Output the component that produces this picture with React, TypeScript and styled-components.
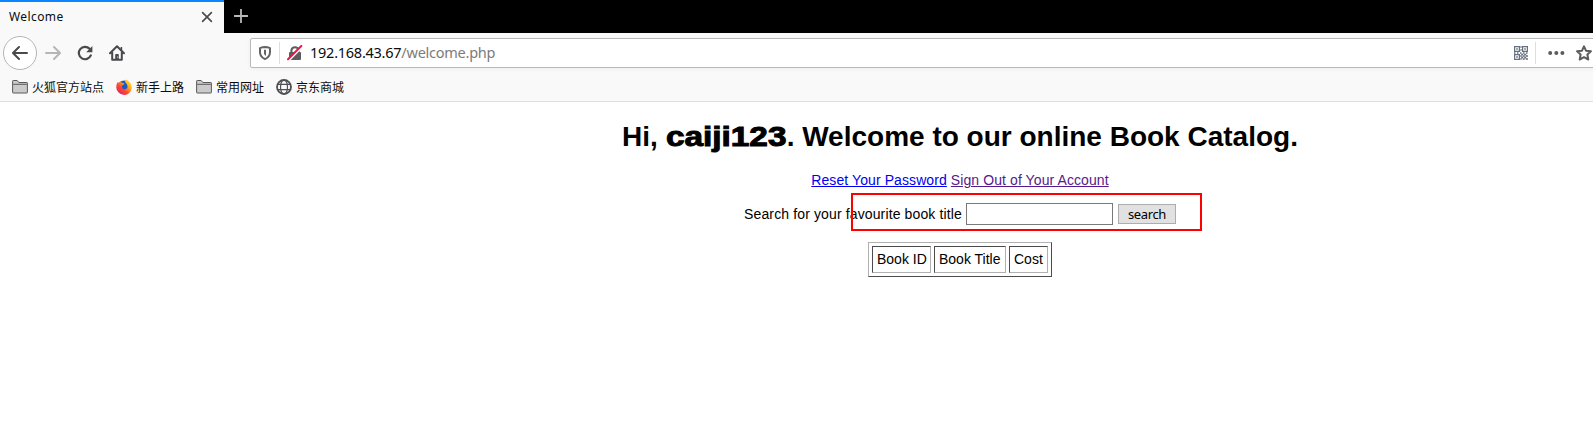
import React from "react";
import styled, { createGlobalStyle } from "styled-components";

const GlobalStyle = createGlobalStyle`
  html, body { margin: 0; padding: 0; background: #fff; }
  *, *::before, *::after { box-sizing: border-box; }
  svg { display: block; flex: none; }
`;

const uiFont = `"Noto Sans", "Noto Sans CJK SC", sans-serif`;
const pageFont = `"Liberation Sans", Arial, sans-serif`;

const Viewport = styled.div`
  width: 100%;
  height: 446px;
  overflow: hidden;
`;

const BrowserWindow = styled.div`
  width: 1920px;
  height: 446px;
  display: flex;
  flex-direction: column;
  background: #fff;
`;

const TabStrip = styled.div`
  display: flex;
  height: 33px;
  background: #000;
`;

const Tab = styled.div`
  display: flex;
  align-items: center;
  justify-content: space-between;
  width: 224px;
  padding: 0 11px 1px 9px;
  border-top: 2px solid #0a84ff;
  background: #f9f9fa;
  font: 12px/16px ${uiFont};
  color: #0c0c0d;
`;

const TabTitle = styled.span`
  letter-spacing: 0.4px;
`;

const NewTab = styled.div`
  padding: 9px 0 0 10px;
`;

const NavBar = styled.div`
  display: flex;
  align-items: center;
  height: 40px;
  padding: 0 0 0 3px;
  background: #f9f9fa;
`;

const NavButtons = styled.div`
  display: flex;
  align-items: center;
  width: 247px;
`;

const BackButton = styled.div`
  display: flex;
  align-items: center;
  justify-content: center;
  width: 34px;
  height: 34px;
  border: 1px solid #b5b5b6;
  border-radius: 50%;
  background: #fff;
`;

const NavIcon = styled.div<{ $gap: number }>`
  margin-left: ${(p) => p.$gap}px;
`;

const UrlBar = styled.div`
  display: flex;
  align-items: center;
  width: 1500px;
  height: 30px;
  padding-left: 7px;
  border: 1px solid #b8b8b9;
  border-radius: 2px;
  background: #fff;
  box-shadow: 0 1px 4px rgba(0, 0, 0, 0.05);
`;

const Divider = styled.div<{ $left: number; $right: number }>`
  width: 1px;
  height: 22px;
  margin: 0 ${(p) => p.$right}px 0 ${(p) => p.$left}px;
  background: #dedede;
`;

const Address = styled.div`
  width: 1204px;
  padding-bottom: 2px;
  font: 14.5px/20px ${uiFont};
  letter-spacing: -0.25px;
  white-space: nowrap;
  color: #0c0c0d;
`;

const Path = styled.span`
  color: #7b7b7c;
`;

const Gap = styled.div<{ $w: number }>`
  width: ${(p) => p.$w}px;
`;

const BookmarksBar = styled.div`
  display: flex;
  align-items: center;
  gap: 12px;
  height: 29px;
  padding: 0 0 0 12px;
  border-bottom: 1px solid #dfdfe0;
  background: #f9f9fa;
`;

const Bookmark = styled.div`
  display: flex;
  align-items: center;
  gap: 4px;
  font: 12px/16px "Noto Sans CJK SC", sans-serif;
  color: #0c0c0d;
  white-space: nowrap;
`;

const Page = styled.main`
  display: flex;
  flex-direction: column;
  align-items: center;
  padding-top: 18px;
  font: 14px/16px ${pageFont};
  color: #000;
`;

const Heading = styled.h1`
  height: 32px;
  margin: 1px 0 0;
  font: bold 28px/32px ${pageFont};
  white-space: nowrap;
`;

const UserName = styled.b`
  display: inline-block;
  width: 121px;
  font-weight: 900;
  transform: scaleX(1.19);
  transform-origin: left;
  -webkit-text-stroke: 1px #000;
`;

const Links = styled.div`
  margin-top: 19px;
  letter-spacing: 0.09px;
  white-space: nowrap;
`;

const Link = styled.a<{ $visited?: boolean }>`
  color: ${(p) => (p.$visited ? "#551a8b" : "#0000ee")};
  text-decoration: underline;
`;

const SearchForm = styled.form`
  position: relative;
  display: flex;
  align-items: center;
  height: 22px;
  margin: 15px 0 17px;
`;

const SearchLabel = styled.label`
  letter-spacing: 0.13px;
`;

const SearchInput = styled.input`
  width: 147px;
  height: 22px;
  margin: 0 5px 0 4px;
  border: 1px solid #7a7a7a;
  border-radius: 0;
  background: #fff;
`;

const SearchButton = styled.button`
  width: 58px;
  height: 20px;
  padding: 0;
  border: 1px solid #adadad;
  background: #e1e1e1;
  font: 13px/18px ${uiFont};
  letter-spacing: -0.4px;
  color: #000;
`;

const Highlight = styled.div`
  position: absolute;
  left: 107px;
  top: -10px;
  width: 351px;
  height: 38px;
  border: 2px solid #f00;
`;

const BookTable = styled.table`
  border: 1px solid;
  border-color: #b0b0b0 #4c4c4c #4c4c4c #b0b0b0;
  border-spacing: 3px;
`;

const HeadCell = styled.td<{ $width: number }>`
  width: ${(p) => p.$width}px;
  height: 27px;
  padding: 4px 0 5px 4px;
  border: 1px solid;
  border-color: #4c4c4c #b0b0b0 #b0b0b0 #4c4c4c;
  font: 14px/16px ${pageFont};
  white-space: nowrap;
`;

const stroke = { fill: "none", stroke: "#4a4a4c", strokeWidth: 2, strokeLinecap: "round", strokeLinejoin: "round" } as const;

const FolderIcon = () => (
  <svg width="16" height="16" viewBox="0 0 16 16">
    <path d="M.6 13.4V2.1Q.6 1.5 1.2 1.5H5.2L6.9 3.5H14.8Q15.4 3.5 15.4 4.1V13.4Q15.4 14 14.8 14H1.2Q.6 14 .6 13.4Z" fill="#cbcbcc" stroke="#5a5a5b" />
    <path d="M1.2 5.3H14.8" stroke="#5a5a5b" />
  </svg>
);

const FirefoxIcon = () => (
  <svg width="16" height="16" viewBox="0 0 16 16">
    <defs>
      <linearGradient id="fox" x1="1" y1="0" x2="0.1" y2="1">
        <stop offset="0" stopColor="#fff044" />
        <stop offset=".35" stopColor="#ffb01f" />
        <stop offset=".62" stopColor="#ff4b2b" />
        <stop offset="1" stopColor="#e2127f" />
      </linearGradient>
    </defs>
    <circle cx="8" cy="7.4" r="6" fill="#1b58c8" />
    <path d="M1.7 3 3 3.9 4.5 1.8 5 3.6Q6.3 3.4 7.2 4L8.6 4.9 7 5.9 5.9 6.9Q5.5 9.8 8 10.2 10.8 10.5 11.5 8.2 11.7 5.6 9.7 3.7 8.6 2.5 9.4.5 11.1 1.2 13 2.6 15.9 5.2 15.8 8.6 15.3 13.1 11.9 15 8.1 16.9 4.2 14.8.7 12.7.3 8.6.1 5.2 1.7 3Z" fill="url(#fox)" />
  </svg>
);

const GlobeIcon = () => (
  <svg width="16" height="16" viewBox="0 0 16 16" fill="none" stroke="#505052">
    <circle cx="8" cy="8" r="7" strokeWidth="1.8" />
    <ellipse cx="8" cy="8" rx="3.5" ry="7" strokeWidth="1.2" />
    <path d="M1.5 5.3H14.5M1.5 10.7H14.5" strokeWidth="1.2" />
  </svg>
);

const QrIcon = () => (
  <svg width="14" height="14" viewBox="0 0 14 14" fill="none" stroke="#66707e">
    <path d="M.6.6H5.4V5.4H.6ZM8.6.6H13.4V5.4H8.6ZM.6 8.6H5.4V13.4H.6Z" strokeWidth="1.2" />
    <path d="M2.2 3H3.8M10.2 3H11.8M2.2 11H3.8" strokeWidth="1.6" />
    <path
      strokeWidth="1.6"
      d="M6.3 1H7.7M6.3 4H7.7M0 7H1.5M3 7H4.5M6 7H7.5M9 7H10.5M12 7H13.5M7.2 8.5H9.2M10.2 8.5H12.2M6.2 10H7.7M8.7 10H10.7M11.7 10H14M7.2 11.5H9.2M10.2 11.5H12.2M6.2 13H7.7M8.7 13H10.7M11.7 13H14"
    />
  </svg>
);

export default function App() {
  return (
    <Viewport>
      <GlobalStyle />
      <BrowserWindow>
        <TabStrip>
          <Tab>
            <TabTitle>Welcome</TabTitle>
            <svg width="12" height="12" viewBox="0 0 12 12">
              <path d="M1.6 1.6 10.4 10.4M10.4 1.6 1.6 10.4" stroke="#4a4a4c" strokeWidth="1.6" strokeLinecap="round" />
            </svg>
          </Tab>
          <NewTab>
            <svg width="14" height="14" viewBox="0 0 14 14">
              <path d="M7 .5V13.5M.5 7H13.5" stroke="#b9b9ba" strokeWidth="1.8" strokeLinecap="round" />
            </svg>
          </NewTab>
        </TabStrip>

        <NavBar>
          <NavButtons>
            <BackButton>
              <svg width="16" height="16" viewBox="0 0 16 16">
                <path d="M15 8H1.4M7 2 1 8 7 14" {...stroke} />
              </svg>
            </BackButton>
            <NavIcon $gap={8}>
              <svg width="16" height="16" viewBox="0 0 16 16">
                <path d="M1 8H14.6M9 2 15 8 9 14" {...stroke} stroke="#b6b6b7" />
              </svg>
            </NavIcon>
            <NavIcon $gap={16}>
              <svg width="16" height="16" viewBox="0 0 16 16">
                <path d="M13.8 10.4A6.2 6.2 0 1 1 12.6 3.8" {...stroke} strokeWidth={2.2} />
                <path d="M15.4 1V7.2H9.2Z" fill="#4a4a4c" />
              </svg>
            </NavIcon>
            <NavIcon $gap={16}>
              <svg width="16" height="16" viewBox="0 0 16 16">
                <path d="M1 8.2 8 1.3 15 8.2M3.2 7.5V14.8H12.8V7.5" {...stroke} />
                <path d="M6.2 15V9.8Q6.2 9 7 9H9Q9.8 9 9.8 9.8V15Z" fill="#4a4a4c" />
                <path d="M12.4 2V5" stroke="#4a4a4c" strokeWidth="1.6" />
                <circle cx="8.6" cy="12" r=".6" fill="#fff" />
              </svg>
            </NavIcon>
          </NavButtons>

          <UrlBar>
            <svg width="14" height="16" viewBox="0 0 14 16">
              <path d="M7 2Q9.6 2.1 12 3.1V7.5Q11.8 11.9 7 14.1 2.2 11.9 2 7.5V3.1Q4.4 2.1 7 2Z" {...stroke} stroke="#646466" />
              <path d="M6 4.8H8V11Q6.4 10.2 6 8.6Z" fill="#646466" />
            </svg>
            <Divider $left={7} $right={7} />
            <svg width="16" height="16" viewBox="0 0 16 16">
              <path d="M4.4 7.5V5A3.7 3.7 0 0 1 11.6 5V7.5" {...stroke} stroke="#5c5c5e" strokeLinecap="butt" />
              <rect x="2" y="7" width="12" height="8" rx="1" fill="#5c5c5e" />
              <path d="M1.6 15.6 14.8 2.4" stroke="#fff" strokeWidth="2" />
              <path d="M1 14.3 14.3 1" stroke="#f0164a" strokeWidth="2" strokeLinecap="round" />
            </svg>
            <Gap $w={7} />
            <Address>
              192.168.43.67<Path>/welcome.php</Path>
            </Address>
            <QrIcon />
            <Divider $left={7} $right={12} />
            <svg width="17" height="6" viewBox="0 0 17 6" fill="#5c5c5e">
              <circle cx="2.2" cy="3" r="2" />
              <circle cx="8.3" cy="3" r="2" />
              <circle cx="14.4" cy="3" r="2" />
            </svg>
            <Gap $w={11} />
            <svg width="16" height="16" viewBox="0 0 16 16">
              <path d="M8 1.3 10 5.7 14.9 6.3 11.4 9.6 12.3 14.5 8 12.2 3.7 14.5 4.6 9.6 1.1 6.3 6 5.7Z" {...stroke} stroke="#5c5c5e" />
            </svg>
          </UrlBar>
        </NavBar>

        <BookmarksBar>
          <Bookmark><FolderIcon />火狐官方站点</Bookmark>
          <Bookmark><FirefoxIcon />新手上路</Bookmark>
          <Bookmark><FolderIcon />常用网址</Bookmark>
          <Bookmark><GlobeIcon />京东商城</Bookmark>
        </BookmarksBar>

        <Page>
          <Heading>
            Hi, <UserName>caiji123</UserName>. Welcome to our online Book Catalog.
          </Heading>
          <Links>
            <Link>Reset Your Password</Link> <Link $visited>Sign Out of Your Account</Link>
          </Links>
          <SearchForm>
            <SearchLabel htmlFor="title">Search for your favourite book title</SearchLabel>
            <SearchInput id="title" />
            <SearchButton type="button">search</SearchButton>
            <Highlight />
          </SearchForm>
          <BookTable>
            <tbody>
              <tr>
                <HeadCell $width={59}>Book ID</HeadCell>
                <HeadCell $width={72}>Book Title</HeadCell>
                <HeadCell $width={39}>Cost</HeadCell>
              </tr>
            </tbody>
          </BookTable>
        </Page>
      </BrowserWindow>
    </Viewport>
  );
}
